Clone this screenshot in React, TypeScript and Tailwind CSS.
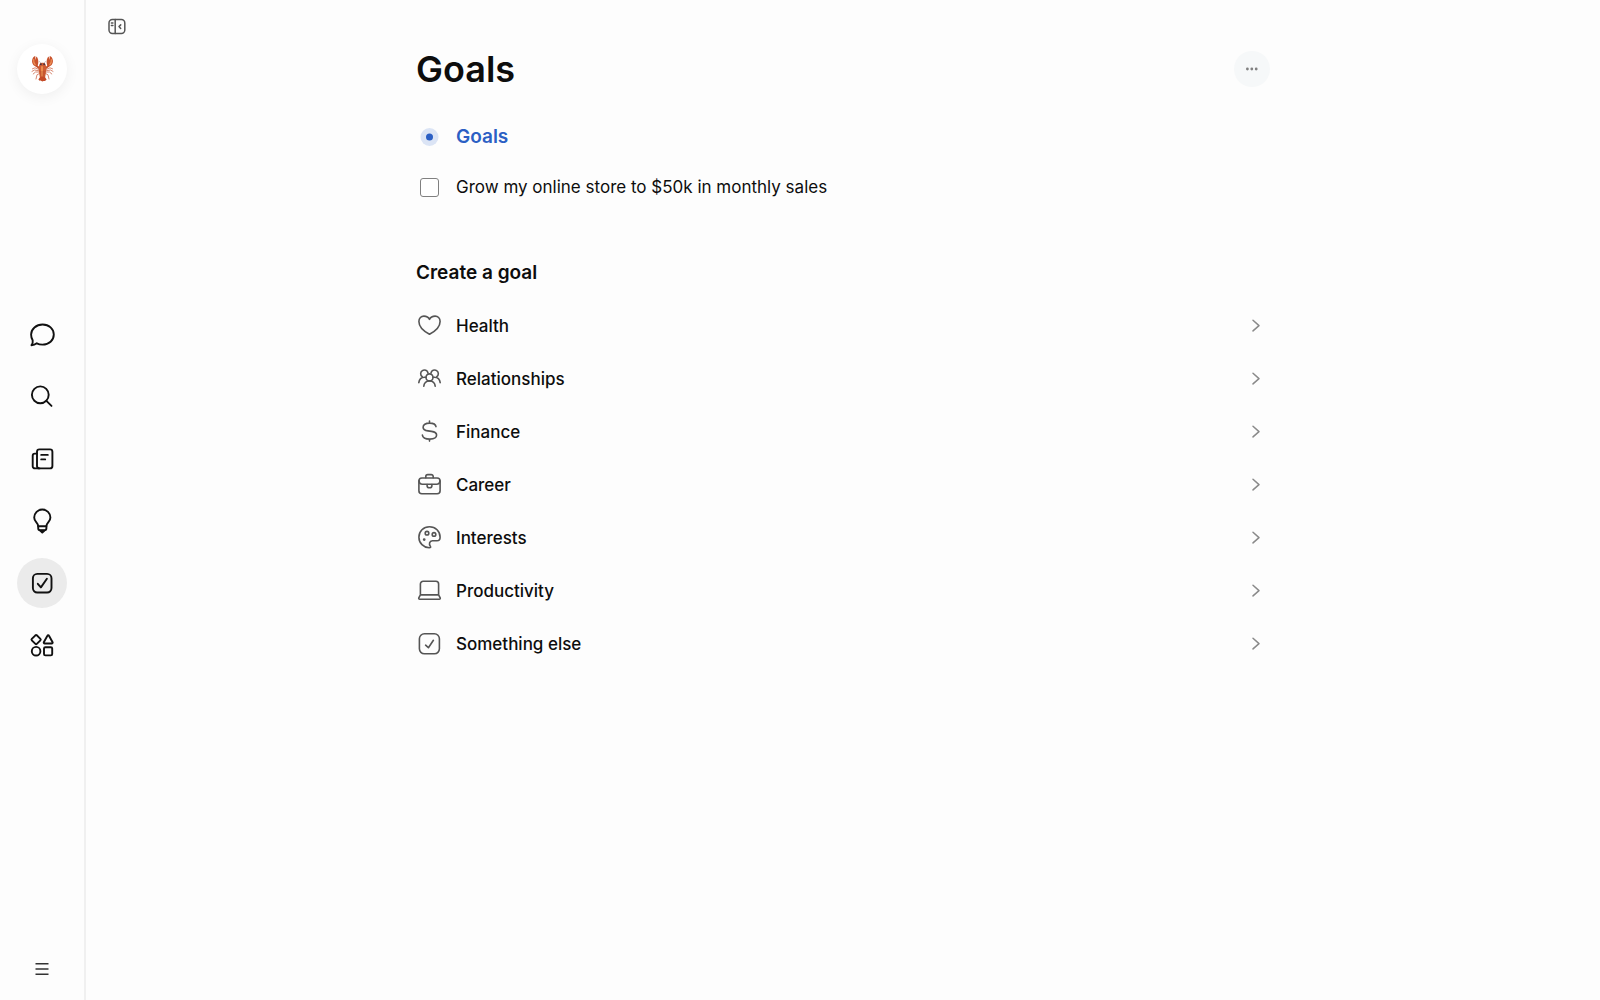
import type { ReactNode } from "react";
import clsx from "clsx";

interface IconProps {
    size?: number;
    className?: string;
    strokeWidth?: number;
    children: ReactNode;
}

function Icon({ size = 28, className, strokeWidth = 1.9, children }: IconProps) {
    return (
        <svg
            width={size}
            height={size}
            viewBox={`0 0 ${size} ${size}`}
            fill="none"
            stroke="currentColor"
            strokeWidth={strokeWidth}
            strokeLinecap="round"
            strokeLinejoin="round"
            className={clsx("shrink-0", className)}
            aria-hidden="true"
        >
            {children}
        </svg>
    );
}

function Lobster() {
    return (
        <svg width="28" height="28" viewBox="0 0 28 28" fill="none" aria-hidden="true">
            {/* Legs */}
            <g stroke="#d98a74" strokeWidth="1" strokeLinecap="round" strokeLinejoin="round">
                <path d="M11 14.5 7 12.8 4.5 13.8M11 15.8 6.5 15 4 16.4M11 17 7.5 17 5.2 19M11.5 18.5 9 19.8 8 24" />
                <path d="M18 14.5 22 12.8 24.5 13.8M18 15.8 22.5 15 25 16.4M18 17 21.5 17 23.8 19M17.5 18.5 20 19.8 21 24" />
            </g>
            {/* Arms and claws */}
            <path d="M11.8 13.5 8.6 11M17.2 13.5 20.4 11" stroke="#c24e2b" strokeWidth="2" strokeLinecap="round" />
            <path d="M9 12C5.8 11.4 3.8 8.8 4.1 5.6 4.3 3.2 5.6 1.4 7.3 1L7.4 5 8.4 1.4C10.6 3.4 11.2 8.2 9 12Z" fill="#c9532d" />
            <path d="M20 12C23.2 11.4 25.2 8.8 24.9 5.6 24.7 3.2 23.4 1.4 21.7 1L21.6 5 20.6 1.4C18.4 3.4 17.8 8.2 20 12Z" fill="#c9532d" />
            <path d="M5.7 4.6C5.4 6.8 6 8.4 7.2 9.6M23.3 4.6C23.6 6.8 23 8.4 21.8 9.6" stroke="#ee9258" strokeWidth="1.2" strokeLinecap="round" />
            {/* Antennae */}
            <path d="M13 8.6C12.7 7.2 12 6.6 11 6.6M16 8.6C16.3 7.2 17 6.6 18 6.6" stroke="#b5a3a6" strokeWidth=".8" />
            {/* Body and tail */}
            <path d="M14.5 7.8C17.2 7.8 18.2 10 18.2 13.2 18.2 17 17.5 20.5 17.1 22.5H11.9C11.5 20.5 10.8 17 10.8 13.2 10.8 10 11.8 7.8 14.5 7.8Z" fill="#cf5c32" />
            <path d="M14 12V20.5" stroke="#ec8d4f" strokeWidth="2" strokeLinecap="round" />
            <path d="M12 17H17M12.2 19H16.8M12.4 21H16.6" stroke="#b64a28" strokeWidth=".6" />
            <path d="M12.1 22 10.4 24.6C11.5 26.6 13.3 25.8 14.5 26.4 15.7 25.8 17.5 26.6 18.6 24.6L16.9 22Z" fill="#c44a26" />
            <circle cx="12.8" cy="9.2" r="1" fill="#4a2f3c" />
            <circle cx="16.2" cy="9.2" r="1" fill="#4a2f3c" />
        </svg>
    );
}

const navItems = [
    {
        label: "Chat",
        icon: (
            <path d="M14.6 3.5C21 3.5 25.8 7.9 25.8 13.6S21 23.6 14.6 23.6C12.4 23.6 10.4 23.2 8.8 22.3 7.3 23.5 5.3 24.2 3.5 24.2 4.6 22.8 5 21.2 4.7 19.4 3.6 17.8 3.1 15.8 3.1 13.6 3.1 7.9 8.2 3.5 14.6 3.5Z" />
        ),
    },
    {
        label: "Search",
        icon: (
            <>
                <circle cx="12.3" cy="11.8" r="8.4" />
                <path d="m18.4 17.9 5.1 5" />
            </>
        ),
    },
    {
        label: "News",
        icon: (
            <>
                <rect x="9" y="4.4" width="15.4" height="19" rx="2.4" />
                <path d="M9 8.6H6.9A2.2 2.2 0 0 0 4.7 10.8V21.2A2.2 2.2 0 0 0 6.9 23.4H11.4M13.2 9.9H19.8M13.2 14.4H17.2" />
            </>
        ),
    },
    {
        label: "Ideas",
        icon: (
            <>
                <path d="M10.2 19.2C10.1 17.6 9.4 16.6 8.2 15.2 6.9 13.7 6.2 12.3 6.2 10.6A8.1 8.1 0 0 1 22.4 10.6C22.4 12.3 21.7 13.7 20.4 15.2 19.2 16.6 18.5 17.6 18.4 19.2Z" />
                <path d="M10.2 19.2V21.2A2 2 0 0 0 12.2 23.2H16.4A2 2 0 0 0 18.4 21.2V19.2" />
                <path d="M12.4 23.8 14.3 25.6 16.2 23.8Z" fill="currentColor" />
            </>
        ),
    },
    {
        label: "Goals",
        active: true,
        icon: (
            <>
                <rect x="4.9" y="4.9" width="18.6" height="18.6" rx="4.4" />
                <path d="m9.8 14.8 3.1 3.6 6-8.6" />
            </>
        ),
    },
    {
        label: "Apps",
        icon: (
            <>
                <path d="M7.4 4.3a1 1 0 0 1 1.4 0l3.6 3.6a1 1 0 0 1 0 1.4l-3.6 3.6a1 1 0 0 1-1.4 0L3.8 9.3a1 1 0 0 1 0-1.4Z" />
                <path d="M19.4 4.8a.9.9 0 0 1 1.6 0l3.6 6.4a.9.9 0 0 1-.8 1.3h-7.2a.9.9 0 0 1-.8-1.3Z" />
                <circle cx="8.1" cy="20.2" r="4.3" />
                <rect x="16" y="16.2" width="8.2" height="8.2" rx="1.4" />
            </>
        ),
    },
];

const categories = [
    {
        name: "Health",
        icon: (
            <path d="M13.5 22.2C10.7 20.7 2.9 15.8 2.9 9.4 2.9 6.2 5.2 4.1 7.9 4.1 10.4 4.1 12.5 5.3 13.5 7.3 14.5 5.3 16.6 4.1 19.1 4.1 21.8 4.1 24.1 6.2 24.1 9.4 24.1 15.8 16.3 20.7 13.5 22.2Z" />
        ),
    },
    {
        name: "Relationships",
        icon: (
            <>
                <path d="M6.2 11.7A3.7 3.7 0 1 1 12 8M15 8A3.7 3.7 0 1 1 20.8 11.7" />
                <circle cx="13.5" cy="12.4" r="3.5" />
                <path d="M7.8 21.2C8 18.2 10.3 15.9 13.5 15.9S19 18.2 19.2 21.2M2.8 17.6C3.2 14.4 5.2 12.2 8.5 12.2H10M24.2 17.6C23.8 14.4 21.8 12.2 18.5 12.2H17" />
            </>
        ),
    },
    {
        name: "Finance",
        icon: (
            <path d="M13.5 3.1V5.1M13.5 21.1V23.1M20 8.7C19.7 6.3 17.3 5.1 13.6 5.1 9.6 5.1 7.1 6.7 7.1 9.2 7.1 11.5 8.8 12.4 12 12.9L15.5 13.4C18.9 13.9 20.6 14.9 20.6 17.1 20.6 19.6 17.9 21.1 13.8 21.1 9.5 21.1 6.7 19.7 6.4 17.1" />
        ),
    },
    {
        name: "Career",
        icon: (
            <>
                <rect x="2.9" y="7" width="21.2" height="15.8" rx="3" />
                <path d="M9.8 6.8V5.6A2 2 0 0 1 11.8 3.6H15.2A2 2 0 0 1 17.2 5.6V6.8M3.1 9.8C3.2 12 4.4 13.3 6.4 13.3H20.6C22.6 13.3 23.8 12 23.9 9.8" />
                <path d="M11.1 13.5V14.4A2.4 2.4 0 0 0 15.9 14.4V13.5" />
            </>
        ),
    },
    {
        name: "Interests",
        icon: (
            <>
                <path d="M13.5 2.8C7.5 2.8 2.9 7.3 2.9 13.2S7.6 23.6 13.2 23.8C14.6 23.8 15.1 23.2 14.3 22.2 12.8 19.7 13.3 17 16.4 16.8H21C23 16.8 24.1 15.4 24.1 13.2 24.1 7.3 19.5 2.8 13.5 2.8Z" />
                <circle cx="11" cy="9.2" r="1.8" />
                <circle cx="18" cy="10.4" r="1.8" />
                <circle cx="8.2" cy="15.6" r=".6" fill="currentColor" />
            </>
        ),
    },
    {
        name: "Productivity",
        icon: (
            <path d="M4.4 17.9V7A2.7 2.7 0 0 1 7.1 4.3H19.9A2.7 2.7 0 0 1 22.6 7V17.9ZM4.4 17.9 2.8 20.9A1 1 0 0 0 3.7 22.3H23.3A1 1 0 0 0 24.2 20.9L22.6 17.9" />
        ),
    },
    {
        name: "Something else",
        icon: (
            <>
                <rect x="3.4" y="3.8" width="20" height="20" rx="5" />
                <path d="m9.6 15.2 2.8 2.5 5-7.4" />
            </>
        ),
    },
];

function Sidebar() {
    return (
        <aside className="flex w-[86px] shrink-0 flex-col items-center border-r-2 border-[#f0f0f0] pt-11">
            <button
                aria-label="Profile"
                className="flex size-[50px] items-center justify-center rounded-full bg-white shadow-[0_3px_14px_rgba(0,0,0,0.06)]"
            >
                <Lobster />
            </button>

            <nav className="flex flex-1 flex-col items-center justify-center gap-3">
                {navItems.map((item) => (
                    <button
                        key={item.label}
                        aria-label={item.label}
                        className={clsx(
                            "flex size-[50px] items-center justify-center rounded-full text-[#111111]",
                            item.active ? "bg-[#ebebeb]" : "hover:bg-[#f3f3f3]"
                        )}
                    >
                        <Icon>{item.icon}</Icon>
                    </button>
                ))}
            </nav>

            <div className="pt-[58px] pb-[6px]">
                <button aria-label="Menu" className="flex size-[50px] items-center justify-center text-[#333333]">
                    <svg width="14" height="14" viewBox="0 0 14 14" stroke="currentColor" strokeWidth="1.6" aria-hidden="true">
                        <path d="M.5 1.8H13.5M.5 7H13.5M.5 12.2H13.5" />
                    </svg>
                </button>
            </div>
        </aside>
    );
}

export default function App() {
    return (
        <div className="flex min-h-screen bg-[#fdfdfd] font-['Inter','Liberation_Sans',sans-serif] text-[#0d0d0d]">
            <Sidebar />

            <main className="flex min-w-0 flex-1 flex-col">
                <header className="flex pt-[11px] pl-[15px]">
                    <button aria-label="Collapse sidebar" className="flex size-8 items-center justify-center text-[#555555]">
                        <Icon size={18} strokeWidth={1.5}>
                            <rect x="1" y="1.6" width="15.8" height="13.8" rx="3.4" />
                            <path d="M7.2 1.6V15.4M3.4 4.9H4.9M3.4 7.5H4.9M12.7 6.9 11 8.6 12.7 10.4" />
                        </Icon>
                    </button>
                </header>

                <div className="mx-auto w-full max-w-[854px]">
                    {/* Title */}
                    <div className="flex h-[52px] items-center justify-between">
                        <h1 className="text-[36px] leading-[44px] font-semibold">Goals</h1>
                        <button
                            aria-label="More options"
                            className="flex size-9 items-center justify-center rounded-full bg-[#f6f8f9] text-[#808080]"
                        >
                            <svg width="14" height="4" viewBox="0 0 14 4" fill="currentColor" aria-hidden="true">
                                <circle cx="2.4" cy="2" r="1.4" />
                                <circle cx="6.8" cy="2" r="1.4" />
                                <circle cx="11.2" cy="2" r="1.4" />
                            </svg>
                        </button>
                    </div>

                    {/* Current goals */}
                    <section className="mt-[17px]">
                        <div className="flex h-[50px] items-center gap-[13px]">
                            <span className="flex w-[27px] justify-center">
                                <svg width="19" height="19" viewBox="0 0 19 19" aria-hidden="true">
                                    <circle cx="9.5" cy="9" r="9" fill="#dbe4f5" />
                                    <circle cx="9.5" cy="9" r="3.5" fill="#2b5fc4" />
                                </svg>
                            </span>
                            <h2 className="text-[19px] leading-7 font-semibold text-[#2b5fc4]">Goals</h2>
                        </div>
                        <label className="flex h-[50px] items-center gap-[13px]">
                            <span className="flex w-[27px] justify-center">
                                <input
                                    type="checkbox"
                                    className="size-[19px] appearance-none rounded-[3px] border border-[#808080] bg-white checked:bg-[#2b5fc4]"
                                />
                            </span>
                            <span className="text-[17px] leading-7">Grow my online store to $50k in monthly sales</span>
                        </label>
                    </section>

                    {/* Create a goal */}
                    <section className="mt-[47px]">
                        <h2 className="text-[19px] leading-7 font-semibold">Create a goal</h2>
                        <ul className="mt-3">
                            {categories.map((category) => (
                                <li key={category.name}>
                                    <button className="flex h-[53px] w-full items-center gap-[13px] pr-[7px] text-left">
                                        <Icon size={27} strokeWidth={1.6} className="text-[#555555]">
                                            {category.icon}
                                        </Icon>
                                        <span className="flex-1 text-[17px] leading-7 font-medium">{category.name}</span>
                                        <Icon size={14} strokeWidth={1.5} className="text-[#8a8a8a]">
                                            <path d="M4 1.3 10 6.6 4 11.9" />
                                        </Icon>
                                    </button>
                                </li>
                            ))}
                        </ul>
                    </section>
                </div>
            </main>
        </div>
    );
}
